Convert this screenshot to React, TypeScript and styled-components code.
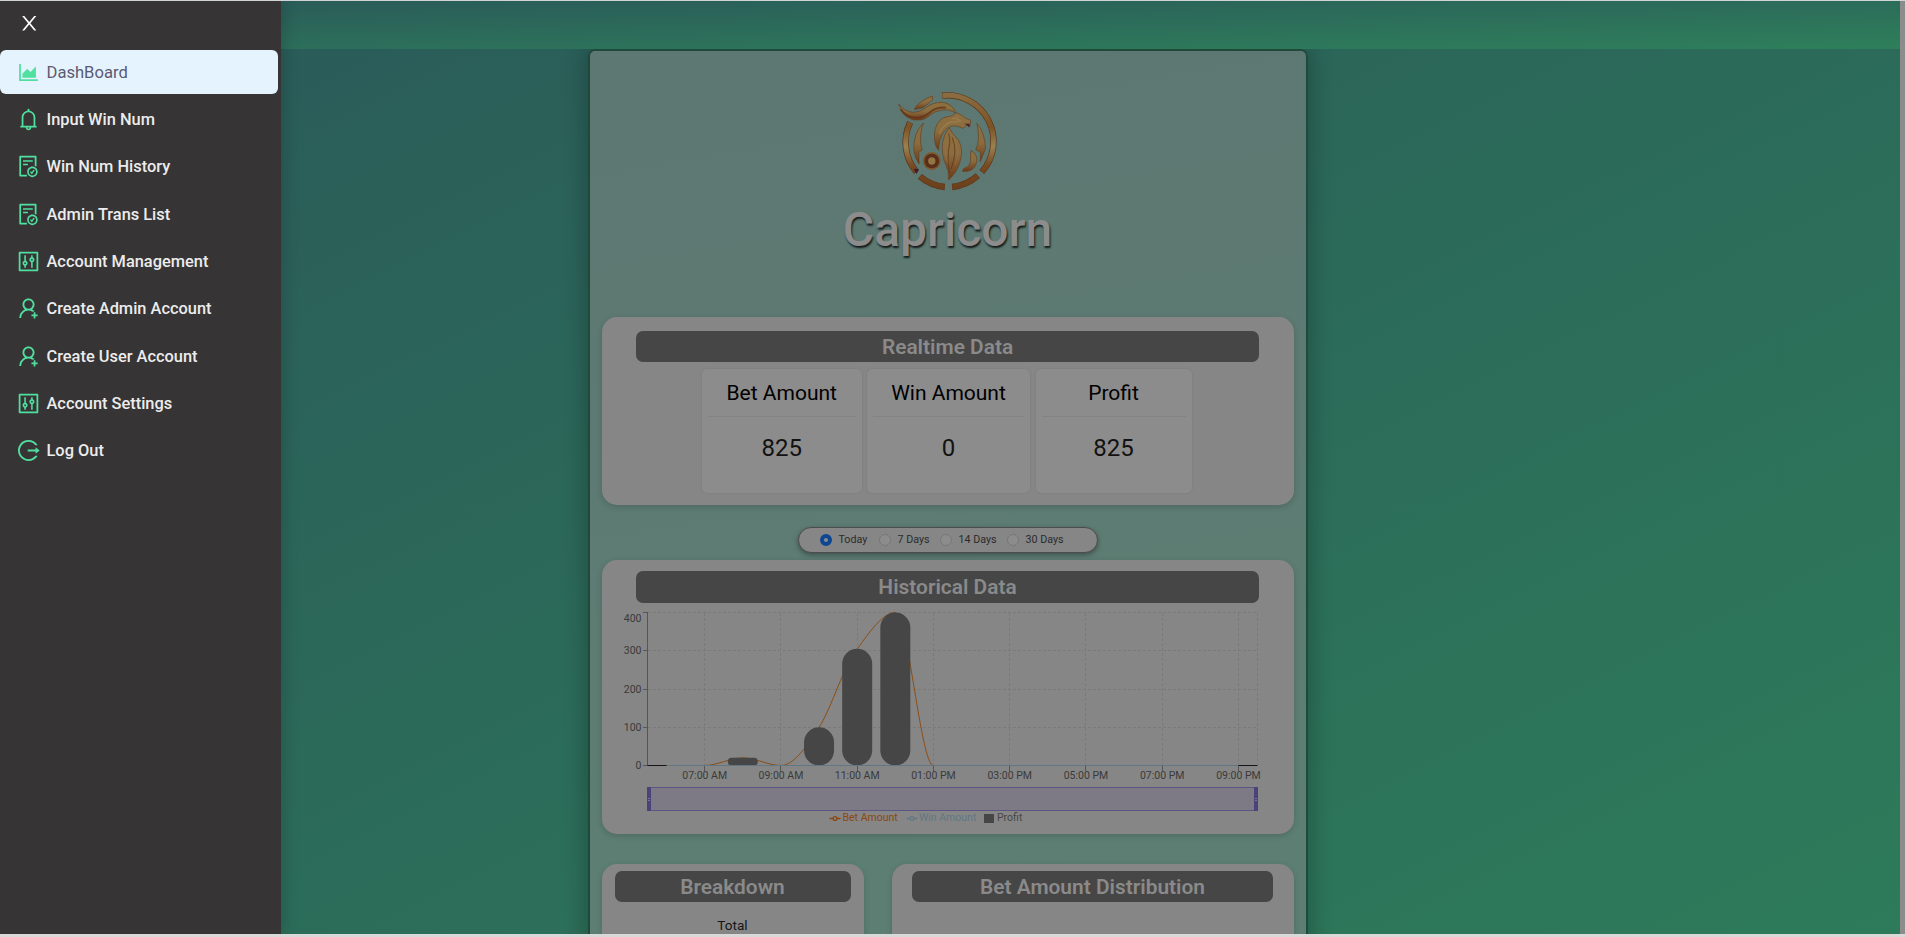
import React from "react";
import styled, { createGlobalStyle } from "styled-components";
import {
  AiOutlineAreaChart,
  AiOutlineBell,
  AiOutlineControl,
  AiOutlineFileDone,
  AiOutlineLogout,
  AiOutlineUserAdd,
} from "react-icons/ai";

const GlobalStyle = createGlobalStyle`
  * { box-sizing: border-box; }
  html, body { margin: 0; padding: 0; overflow: hidden; }
  body { background: #d9d9d9; font-family: Roboto, "Liberation Sans", sans-serif; }
`;

const Page = styled.div`
  display: flex;
  height: 937px;
  width: 1905px;
  border-top: 1px solid #d0d5d3;
  border-bottom: 3px solid #d9d9d9;
  overflow: hidden;
`;

const Sidebar = styled.nav`
  flex: 0 0 281px;
  position: relative;
  z-index: 2;
  background: #373435;
  box-shadow: 3px 0 14px rgba(0, 0, 0, 0.16);
`;

const CloseRow = styled.div`
  height: 49px;
  padding: 11px 0 0 18px;
  color: #fff;
  line-height: 0;
`;

const MenuItem = styled.div<{ $active?: boolean }>`
  display: flex;
  align-items: center;
  gap: 5.5px;
  width: 278px;
  height: 44px;
  margin-bottom: 3.35px;
  padding-left: 16px;
  border-radius: 6px;
  background: ${(p) => (p.$active ? "#e5f3ff" : "transparent")};
  color: ${(p) => (p.$active ? "#5b5a70" : "#ececec")};
  font-size: ${(p) => (p.$active ? 16.6 : 16.4)}px;
  font-weight: ${(p) => (p.$active ? 400 : 500)};
  white-space: nowrap;
  svg { flex: none; width: 25px; height: 25px; color: #4fe0a0; }
`;

const Content = styled.div`
  flex: 1;
  margin-left: -281px;
  display: flex;
  flex-direction: column;
  background: linear-gradient(to bottom right, #2a5959, #2d7b5a);
`;

const TopBar = styled.header`
  flex: 0 0 48px;
  background: linear-gradient(to bottom right, #2a5959, #2e7f5b);
`;

const Scrollbar = styled.div`
  flex: 0 0 5px;
  background: #8c8c8c;
`;

const Stage = styled.main`
  flex: 1;
  min-height: 0;
  overflow: hidden;
  padding-left: 587.5px;
`;

const Panel = styled.section`
  width: 720px;
  height: 1400px;
  padding: 0 12px;
  border: 2px solid #1f4a3b;
  border-radius: 7px;
  background: linear-gradient(170deg, #5d7772, #5d7f73 885px);
  box-shadow: 0 0 22px 3px rgba(0, 0, 0, 0.24);
`;

const Brand = styled.div`
  height: 266px;
  padding-top: 29px;
  display: flex;
  flex-direction: column;
  align-items: center;
`;

const BrandName = styled.h1`
  margin: 0;
  color: #8c8c8c;
  font-size: 48px;
  font-weight: 500;
  line-height: 60px;
  text-shadow: 1px 2px 2px rgba(0, 0, 0, 0.8);
`;

const Card = styled.section<{ $h: number; $pt: number; $px: number; $w?: number }>`
  width: ${(p) => (p.$w ? `${p.$w}px` : "auto")};
  height: ${(p) => p.$h}px;
  padding: ${(p) => p.$pt}px ${(p) => p.$px}px 0;
  border-radius: 15px;
  background: #868686;
  box-shadow: 0 2px 6px rgba(0, 0, 0, 0.16);
`;

const CardTitle = styled.h2<{ $h?: number }>`
  margin: 0;
  height: ${(p) => p.$h ?? 31}px;
  border-radius: 7px;
  background: #464646;
  color: #8a8a8a;
  font-size: 20.9px;
  font-weight: 600;
  line-height: ${(p) => (p.$h ?? 31) + 1}px;
  text-align: center;
`;

const Tiles = styled.div`
  display: flex;
  gap: 5.5px;
  margin: 7px 0 0 66px;
`;

const Tile = styled.div<{ $w: number }>`
  width: ${(p) => p.$w}px;
  height: 124px;
  padding: 0 6px;
  border-radius: 5px;
  background: #8c8c8c;
  box-shadow: 0 0 2px rgba(0, 0, 0, 0.12);
  text-align: center;
`;

const TileName = styled.div`
  height: 48px;
  border-bottom: 1px solid #838383;
  color: #000;
  font-size: 21px;
  line-height: 48px;
`;

const TileValue = styled.div`
  padding-top: 17px;
  color: #121212;
  font-size: 24px;
  line-height: 28px;
`;

const RangePicker = styled.div`
  display: flex;
  align-items: center;
  width: 299.5px;
  height: 26px;
  margin: 22px auto 7px 196.5px;
  padding-left: 20.5px;
  border: 1px solid #4c4c4c;
  border-radius: 13px;
  background: #868686;
  box-shadow: 0 2px 5px rgba(0, 0, 0, 0.35);
`;

const Option = styled.label<{ $w: number }>`
  display: flex;
  align-items: center;
  gap: 7px;
  width: ${(p) => p.$w}px;
  color: #2b2b2b;
  font-size: 10.7px;
  line-height: 13px;
  white-space: nowrap;
`;

const OptionText = styled.span`
  padding-bottom: 2px;
`;

const Dot = styled.span<{ $on?: boolean }>`
  width: 12px;
  height: 12px;
  border-radius: 50%;
  border: ${(p) => (p.$on ? "4px solid #0d4693" : "1px solid #777")};
  background: #8c8c8c;
`;

const Chart = styled.svg`
  display: block;
  margin-left: -34.5px;
  font-size: 10.5px;
`;

const Row = styled.div`
  display: flex;
  justify-content: space-between;
  margin-top: 30px;
`;

const Total = styled.div`
  margin-top: 14px;
  color: #151515;
  font-size: 13.6px;
  line-height: 18px;
  text-align: center;
`;

const MENU = [
  { label: "DashBoard", Icon: AiOutlineAreaChart, active: true },
  { label: "Input Win Num", Icon: AiOutlineBell },
  { label: "Win Num History", Icon: AiOutlineFileDone },
  { label: "Admin Trans List", Icon: AiOutlineFileDone },
  { label: "Account Management", Icon: AiOutlineControl },
  { label: "Create Admin Account", Icon: AiOutlineUserAdd },
  { label: "Create User Account", Icon: AiOutlineUserAdd },
  { label: "Account Settings", Icon: AiOutlineControl },
  { label: "Log Out", Icon: AiOutlineLogout },
];

const TILES = [
  { name: "Bet Amount", value: 825, w: 159.5 },
  { name: "Win Amount", value: 0, w: 163 },
  { name: "Profit", value: 825, w: 156 },
];

const RANGES = [
  { label: "Today", w: 59, on: true },
  { label: "7 Days", w: 61 },
  { label: "14 Days", w: 67 },
  { label: "30 Days", w: 60 },
];

const CloseIcon = () => (
  <svg width="22.5" height="22.5" viewBox="0 0 1024 1024" fill="currentColor">
    <path d="M563.8 512l262.5-312.9c4.4-5.2.7-13.1-6.1-13.1h-79.8c-4.7 0-9.2 2.1-12.3 5.7L511.6 449.8 295.1 191.7c-3-3.6-7.5-5.7-12.3-5.7H203c-6.8 0-10.5 7.9-6.1 13.1L459.4 512 196.9 824.9A7.95 7.95 0 0 0 203 838h79.8c4.7 0 9.2-2.1 12.3-5.7l216.5-258.1 216.5 258.1c3 3.6 7.5 5.7 12.3 5.7h79.8c6.8 0 10.5-7.9 6.1-13.1L563.8 512z" />
  </svg>
);

const Emblem = () => (
  <svg width="130" height="120" viewBox="9.6 0 390 360">
    <defs>
      <linearGradient id="gold" x1="0" y1="0" x2="0" y2="1">
        <stop offset="0" stopColor="#8f7040" />
        <stop offset="0.5" stopColor="#8a6c3f" />
        <stop offset="1" stopColor="#6d3a18" />
      </linearGradient>
      <linearGradient id="ring" gradientUnits="userSpaceOnUse" x1="0" y1="40" x2="0" y2="330">
        <stop offset="0" stopColor="#8c6d41" />
        <stop offset="0.35" stopColor="#7c5224" />
        <stop offset="0.55" stopColor="#9a8150" />
        <stop offset="0.75" stopColor="#774a22" />
        <stop offset="1" stopColor="#6a3f1b" />
      </linearGradient>
    </defs>
    <g fill="none" stroke="#5c3317" strokeWidth="19">
      <path d="M187 47A138 138 0 0 1 306 276" />
      <path d="M294 287A138 138 0 0 1 217 321" />
      <path d="M195 321A138 138 0 0 1 120 289" />
      <path d="M110 276A138 138 0 0 1 91 127" />
    </g>
    <g fill="none" stroke="url(#ring)" strokeWidth="15">
      <path d="M188 47A138 138 0 0 1 307 275" />
      <path d="M293 288A138 138 0 0 1 218 321" />
      <path d="M194 321A138 138 0 0 1 121 290" />
      <path d="M109 275A138 138 0 0 1 91 128" />
    </g>
    <path d="M101 266L117 268L111 282Z" fill="#3b1c2b" />
    <g fill="url(#gold)" stroke="#65401f" strokeWidth="2">
      <path d="M103 88Q120 60 158 48L158 60Q140 75 130 83Q117 87 103 88Z" />
      <path d="M57 72Q72 94 99 97Q122 98 141 81Q159 67 187 67Q218 69 229 101Q212 87 186 90Q164 92 145 110Q127 124 98 119Q65 109 57 72Z" />
      <path d="M229 98Q247 104 256 114L273 121L270 141L261 136L249 145L235 139Q211 133 194 153Q176 177 177 211Q162 197 164 162Q167 126 192 113L218 107Z" />
      <path d="M208 143Q216 160 235 179Q253 207 240 248Q230 279 206 300Q209 274 198 254Q184 225 188 188Q192 163 208 143Z" />
      <path d="M131 129Q122 149 122 183L127 210L117 217L118 252Q105 234 102 210Q100 159 131 129Z" />
      <path d="M291 130Q316 157 317 207L301 246L302 217L288 209Q303 178 291 130Z" />
      <path d="M273 211Q294 222 291 246Q285 270 263 274L248 274L251 266Q276 259 272 231Z" />
    </g>
    <path d="M63 88Q80 114 113 113Q135 111 151 97Q171 80 198 83" fill="none" stroke="#603018" strokeOpacity="0.75" strokeWidth="6" />
    <path d="M207 160Q214 187 206 212Q202 250 209 280M217 172Q235 211 214 267" fill="none" stroke="#613017" strokeOpacity="0.7" strokeWidth="3" />
    <path d="M199 180Q192 211 203 247M225 181Q241 210 226 255" fill="none" stroke="#98784a" strokeOpacity="0.7" strokeWidth="2" />
    <path d="M216 116Q232 113 242 122Q226 128 214 126Q191 132 178 161" fill="none" stroke="#a38757" strokeOpacity="0.6" strokeWidth="4" />
    <path d="M253 131L270 131L268 142L262 136Z" fill="#461f28" />
    <circle cx="156" cy="243" r="27" fill="#7e592d" />
    <circle cx="156" cy="243" r="22" fill="#592e1a" />
    <circle cx="156" cy="243" r="11" fill="#947544" />
  </svg>
);

const BAND = 38.125;
const X0 = 45.5;
const BASE = 162.5;
const yOf = (v: number) => BASE - (v * 153) / 400;
const BARS = [
  { i: 2.5, v: 20 },
  { i: 4.5, v: 100 },
  { i: 5.5, v: 305 },
  { i: 6.5, v: 400 },
];
const HOURS = ["07:00 AM", "09:00 AM", "11:00 AM", "01:00 PM", "03:00 PM", "05:00 PM", "07:00 PM", "09:00 PM"];

const HistoryChart = () => (
  <Chart width="680" height="230" viewBox="0 0 680 230">
    <g stroke="#7a7a7a" strokeDasharray="3 2" shapeRendering="crispEdges">
      {[100, 200, 300, 400].map((v) => (
        <line key={v} x1={X0} x2={655.5} y1={yOf(v)} y2={yOf(v)} />
      ))}
      {HOURS.map((h, k) => (
        <line key={h} x1={X0 + BAND * (1.5 + 2 * k)} x2={X0 + BAND * (1.5 + 2 * k)} y1={9.5} y2={BASE} />
      ))}
      <line x1={655.5} x2={655.5} y1={9.5} y2={BASE} />
    </g>
    <g stroke="#555" shapeRendering="crispEdges">
      <line x1={X0} x2={X0} y1={9.5} y2={BASE} />
      {[0, 100, 200, 300, 400].map((v) => (
        <line key={v} x1={X0 - 5} x2={X0} y1={yOf(v)} y2={yOf(v)} />
      ))}
      {HOURS.map((h, k) => (
        <line key={h} x1={X0 + BAND * (1.5 + 2 * k)} x2={X0 + BAND * (1.5 + 2 * k)} y1={BASE} y2={BASE + 5} />
      ))}
    </g>
    <g fill="#3a3a3a">
      {[0, 100, 200, 300, 400].map((v) => (
        <text key={v} x={39.5} y={v === 400 ? 19 : yOf(v) + 3.7} textAnchor="end">{v}</text>
      ))}
      {HOURS.map((h, k) => (
        <text key={h} x={X0 + BAND * (1.5 + 2 * k)} y={176} textAnchor="middle">{h}</text>
      ))}
    </g>
    <path
      d={`M${X0 + 19} ${BASE}H102.7C115.4 ${BASE} 127.7 ${yOf(20)} 140.8 ${yOf(20)}S166.2 ${BASE} 178.9 ${BASE}C191.7 ${BASE} 204.4 144 217.1 ${yOf(100)}C229.8 105 242.5 60 255.2 ${yOf(305)}C267.9 29 280.6 9.5 293.3 9.5C306 9.5 318.7 ${BASE} 331.4 ${BASE}`}
      fill="none"
      stroke="#8c4e15"
    />
    {BARS.map(({ i, v }) => {
      const h = BASE - yOf(v);
      return (
        <rect key={i} x={X0 + BAND * i - 15} y={yOf(v)} width={30} height={h} rx={Math.min(15, h / 2)} fill="#464646" />
      );
    })}
    <line x1={X0 + 19} x2={636.4} y1={BASE} y2={BASE} stroke="#617783" />
    <path d={`M${X0} ${BASE}h19M636.4 ${BASE}h19`} stroke="#151515" />
    <rect x={45.5} y={184.5} width={610} height={23} fill="#7d7a85" stroke="#5d5685" />
    <rect x={45} y={184} width={4} height={24} fill="#494379" />
    <rect x={652} y={184} width={4} height={24} fill="#494379" />
    <path d="M46 195.5h2M46 197.5h2M653 195.5h2M653 197.5h2" stroke="#8c8c8c" strokeWidth="0.7" />
    <g fill="none" stroke="#8c4610" strokeWidth="1.3">
      <path d="M227.5 215.5h3.7M234.8 215.5h3.7" />
      <circle cx="233" cy="215.5" r="1.9" />
    </g>
    <g fill="none" stroke="#617783" strokeWidth="1.3">
      <path d="M304.5 215.5h3.7M311.8 215.5h3.7" />
      <circle cx="310" cy="215.5" r="1.9" />
    </g>
    <rect x={382} y={211} width={10} height={9} fill="#464646" />
    <text x={240.5} y={218} fill="#8c4610">Bet Amount</text>
    <text x={317} y={218} fill="#617783">Win Amount</text>
    <text x={395} y={218} fill="#464646">Profit</text>
  </Chart>
);

export default function App() {
  return (
    <>
      <GlobalStyle />
      <Page>
        <Sidebar>
          <CloseRow>
            <CloseIcon />
          </CloseRow>
          {MENU.map(({ label, Icon, active }) => (
            <MenuItem key={label} $active={active}>
              <Icon />
              {label}
            </MenuItem>
          ))}
        </Sidebar>
        <Content>
          <TopBar />
          <Stage>
            <Panel>
              <Brand>
                <Emblem />
                <BrandName>Capricorn</BrandName>
              </Brand>
              <Card $h={188} $pt={14} $px={34.5}>
                <CardTitle>Realtime Data</CardTitle>
                <Tiles>
                  {TILES.map((t) => (
                    <Tile key={t.name} $w={t.w}>
                      <TileName>{t.name}</TileName>
                      <TileValue>{t.value}</TileValue>
                    </Tile>
                  ))}
                </Tiles>
              </Card>
              <RangePicker>
                {RANGES.map((r) => (
                  <Option key={r.label} $w={r.w}>
                    <Dot $on={r.on} />
                    <OptionText>{r.label}</OptionText>
                  </Option>
                ))}
              </RangePicker>
              <Card $h={274} $pt={11} $px={34.5}>
                <CardTitle $h={32}>Historical Data</CardTitle>
                <HistoryChart />
              </Card>
              <Row>
                <Card $h={300} $pt={7} $px={13} $w={262}>
                  <CardTitle>Breakdown</CardTitle>
                  <Total>Total</Total>
                </Card>
                <Card $h={300} $pt={7} $px={20.5} $w={402}>
                  <CardTitle>Bet Amount Distribution</CardTitle>
                </Card>
              </Row>
            </Panel>
          </Stage>
        </Content>
        <Scrollbar />
      </Page>
    </>
  );
}
